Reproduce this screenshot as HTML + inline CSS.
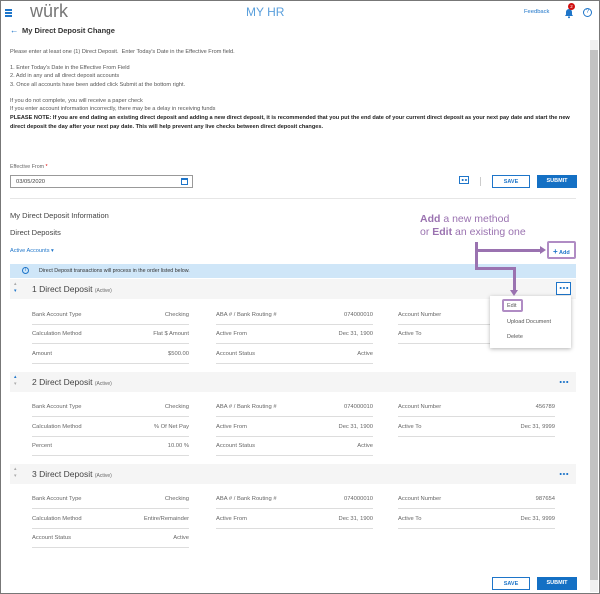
<!DOCTYPE html>
<html><head><meta charset="utf-8"><style>
*{margin:0;padding:0;box-sizing:border-box}
body{width:600px;height:594px;overflow:hidden;background:#fff;font-family:"Liberation Sans",sans-serif;color:#444;position:relative}
.a{position:absolute;white-space:nowrap}
.t{font-size:5.6px;color:#555}
.f{position:absolute;height:19px;border-bottom:1px solid #ddd;font-size:5.8px;color:#666;width:157px}
.f span{position:absolute;top:6px}
.f .v{right:0}
.hd{position:absolute;left:10px;width:566px;height:20px;background:#f5f5f5}
.hd .n{position:absolute;left:22px;top:5px;font-size:8.5px;color:#444}
.hd .n small{font-size:5px;color:#666}
.btn{position:absolute;height:13px;font-size:5.5px;font-weight:bold;text-align:center;line-height:12px}
.save{border:1px solid #1e75c9;color:#1e75c9;background:#fff;width:38px}
.sub{background:#1470c4;color:#fff;width:40px;line-height:13px}
.pur{background:#9a72b0;position:absolute}
.dots{position:absolute;width:10px;height:2px;background:radial-gradient(circle,#1e75c9 0.9px,transparent 1.1px) 0 0/3.3px 2px repeat-x}
</style></head><body>
<div class="a" style="left:0;top:0;width:600px;height:594px;border:1px solid #777"></div>
<!-- header -->
<div class="a" style="left:5px;top:9px;width:7px;height:1.5px;background:#1e75c9;box-shadow:0 3px 0 #1e75c9,0 6px 0 #1e75c9"></div>
<div class="a" style="left:30px;top:1px;font-size:18px;color:#777">würk</div>
<div class="a" style="left:246px;top:5px;font-size:12px;color:#5a9fdc">MY HR</div>
<div class="a" style="left:524px;top:9px;font-size:5.8px;color:#1e75c9">Feedback</div>
<svg class="a" style="left:563px;top:7px" width="12" height="12" viewBox="0 0 12 12"><path d="M2 9h8L9 7.5V5a3 3 0 0 0-6 0v2.5z" fill="#1e75c9"/><circle cx="6" cy="10.2" r="1" fill="#1e75c9"/></svg>
<div class="a" style="left:568px;top:3px;width:7px;height:7px;border-radius:50%;background:#d01010;color:#fff;font-size:4.5px;text-align:center;line-height:7px">2</div>
<div class="a" style="left:583px;top:8px;width:9px;height:9px;border:1px solid #1e75c9;border-radius:50%;font-size:6px;color:#1e75c9;text-align:center;line-height:7px">?</div>
<div class="a" style="left:10px;top:25px;font-size:8.5px;color:#1e75c9">←</div>
<div class="a" style="left:22px;top:26px;font-size:7.5px;font-weight:bold;color:#333">My Direct Deposit Change</div>
<!-- scrollbar -->
<div class="a" style="left:590px;top:40px;width:8px;height:552px;background:#f0f0f0"></div>
<div class="a" style="left:590px;top:50px;width:8px;height:530px;background:#c2c2c2"></div>
<!-- instructions -->
<div class="a t" style="left:10px;top:49px">Please enter at least one (1) Direct Deposit.&nbsp; Enter Today's Date in the Effective From field.</div>
<div class="a t" style="left:10px;top:65px">1. Enter Today's Date in the Effective From Field</div>
<div class="a t" style="left:10px;top:73px">2. Add in any and all direct deposit accounts</div>
<div class="a t" style="left:10px;top:82px">3. Once all accounts have been added click Submit at the bottom right.</div>
<div class="a t" style="left:10px;top:98px">If you do not complete, you will receive a paper check</div>
<div class="a t" style="left:10px;top:106px">If you enter account information incorrectly, there may be a delay in receiving funds</div>
<div class="a t" style="left:10px;top:114px;width:570px;white-space:normal;line-height:8.5px;color:#222;font-weight:bold">PLEASE NOTE: If you are end dating an existing direct deposit and adding a new direct deposit, it is recommended that you put the end date of your current direct deposit as your next pay date and start the new direct deposit the day after your next pay date. This will help prevent any live checks between direct deposit changes.</div>
<!-- effective -->
<div class="a" style="left:10px;top:164px;font-size:5.3px;color:#666">Effective From <span style="color:#d00">*</span></div>
<div class="a" style="left:10px;top:175px;width:183px;height:13px;border:1px solid #999;font-size:5.8px;color:#444;padding:3px 5px">03/05/2020</div>
<div class="a" style="left:181px;top:178px;width:7px;height:7px;border:1px solid #1e75c9;border-top-width:2px"></div>
<div class="a" style="left:459px;top:176px;width:10px;height:8px;border:1px solid #1e75c9"></div>
<div class="dots" style="left:461px;top:179px;width:7px"></div>
<div class="a" style="left:480px;top:177px;width:1px;height:9px;background:#ccc"></div>
<div class="btn save" style="left:492px;top:175px">SAVE</div>
<div class="btn sub" style="left:537px;top:175px">SUBMIT</div>
<div class="a" style="left:10px;top:198px;width:566px;height:1px;background:#e6e6e6"></div>
<div class="a" style="left:10px;top:211px;font-size:7.5px;color:#444">My Direct Deposit Information</div>
<div class="a" style="left:10px;top:228px;font-size:7.5px;color:#444">Direct Deposits</div>
<div class="a" style="left:10px;top:248px;font-size:5.6px;color:#1e75c9">Active Accounts ▾</div>
<!-- banner -->
<div class="a" style="left:10px;top:264px;width:566px;height:14px;background:#cfe6f8"></div>
<div class="a" style="left:22px;top:267px;width:7px;height:7px;border:1px solid #1e75c9;border-radius:50%;font-size:5px;color:#1e75c9;text-align:center;line-height:5px">i</div>
<div class="a" style="left:39px;top:268px;font-size:5.3px;color:#333">Direct Deposit transactions will process in the order listed below.</div>
<!-- deposit 1 -->
<div class="hd" style="top:279px"><div class="n">1 Direct Deposit <small>(Active)</small></div></div>
<div class="a" style="left:14px;top:281px;font-size:5px;color:#aaa;line-height:7px">▴<br><span style="color:#1e75c9">▾</span></div>
<div class="a" style="left:556px;top:282px;width:15px;height:13px;border:1px solid #1e75c9;background:#fff"></div>
<div class="dots" style="left:559px;top:287px"></div>
<div class="f" style="left:32px;top:306px"><span>Bank Account Type</span><span class="v">Checking</span></div>
<div class="f" style="left:32px;top:325px"><span>Calculation Method</span><span class="v">Flat $ Amount</span></div>
<div class="f" style="left:32px;top:345px"><span>Amount</span><span class="v">$500.00</span></div>
<div class="f" style="left:216px;top:306px"><span>ABA # / Bank Routing #</span><span class="v">074000010</span></div>
<div class="f" style="left:216px;top:325px"><span>Active From</span><span class="v">Dec 31, 1900</span></div>
<div class="f" style="left:216px;top:345px"><span>Account Status</span><span class="v">Active</span></div>
<div class="f" style="left:398px;top:306px"><span>Account Number</span></div>
<div class="f" style="left:398px;top:325px"><span>Active To</span></div>
<div class="a" style="left:490px;top:296px;width:81px;height:52px;background:#fff;box-shadow:0 1px 4px rgba(0,0,0,.3)"></div>
<div class="a" style="left:502px;top:299px;width:21px;height:13px;border:2px solid #b08cc4;border-radius:2px;font-size:5.5px;color:#555;padding:2px 0 0 3px">Edit</div>
<div class="a" style="left:507px;top:319px;font-size:5.5px;color:#555">Upload Document</div>
<div class="a" style="left:507px;top:334px;font-size:5.5px;color:#555">Delete</div>
<!-- deposit 2 -->
<div class="hd" style="top:372px"><div class="n">2 Direct Deposit <small>(Active)</small></div></div>
<div class="a" style="left:14px;top:374px;font-size:5px;color:#1e75c9;line-height:7px">▴<br><span style="color:#aaa">▾</span></div>
<div class="dots" style="left:559px;top:381px"></div>
<div class="f" style="left:32px;top:398px"><span>Bank Account Type</span><span class="v">Checking</span></div>
<div class="f" style="left:32px;top:418px"><span>Calculation Method</span><span class="v">% Of Net Pay</span></div>
<div class="f" style="left:32px;top:437px"><span>Percent</span><span class="v">10.00 %</span></div>
<div class="f" style="left:216px;top:398px"><span>ABA # / Bank Routing #</span><span class="v">074000010</span></div>
<div class="f" style="left:216px;top:418px"><span>Active From</span><span class="v">Dec 31, 1900</span></div>
<div class="f" style="left:216px;top:437px"><span>Account Status</span><span class="v">Active</span></div>
<div class="f" style="left:398px;top:398px"><span>Account Number</span><span class="v">456789</span></div>
<div class="f" style="left:398px;top:418px"><span>Active To</span><span class="v">Dec 31, 9999</span></div>
<!-- deposit 3 -->
<div class="hd" style="top:464px"><div class="n">3 Direct Deposit <small>(Active)</small></div></div>
<div class="a" style="left:14px;top:466px;font-size:5px;color:#aaa;line-height:7px">▴<br>▾</div>
<div class="dots" style="left:559px;top:473px"></div>
<div class="f" style="left:32px;top:490px"><span>Bank Account Type</span><span class="v">Checking</span></div>
<div class="f" style="left:32px;top:510px"><span>Calculation Method</span><span class="v">Entire/Remainder</span></div>
<div class="f" style="left:32px;top:529px"><span>Account Status</span><span class="v">Active</span></div>
<div class="f" style="left:216px;top:490px"><span>ABA # / Bank Routing #</span><span class="v">074000010</span></div>
<div class="f" style="left:216px;top:510px"><span>Active From</span><span class="v">Dec 31, 1900</span></div>
<div class="f" style="left:398px;top:490px"><span>Account Number</span><span class="v">987654</span></div>
<div class="f" style="left:398px;top:510px"><span>Active To</span><span class="v">Dec 31, 9999</span></div>
<div class="btn save" style="left:492px;top:577px">SAVE</div>
<div class="btn sub" style="left:537px;top:577px">SUBMIT</div>
<!-- annotation (on top) -->
<div class="a" style="left:420px;top:213px;font-size:10.5px;color:#9a72b0;line-height:13px"><b>Add</b> a new method<br>or <b>Edit</b> an existing one</div>
<div class="pur" style="left:475px;top:242px;width:3px;height:28px"></div>
<div class="pur" style="left:475px;top:249px;width:67px;height:3px"></div>
<div class="a" style="left:540px;top:246px;border-left:6px solid #9a72b0;border-top:4.5px solid transparent;border-bottom:4.5px solid transparent"></div>
<div class="pur" style="left:475px;top:267px;width:41px;height:3px"></div>
<div class="pur" style="left:513px;top:267px;width:3px;height:25px"></div>
<div class="a" style="left:510px;top:290px;border-top:6px solid #9a72b0;border-left:4.5px solid transparent;border-right:4.5px solid transparent"></div>
<div class="a" style="left:547px;top:241px;width:29px;height:18px;border:2px solid #b08cc4;border-radius:2px;background:#fff;font-size:5.5px;color:#1e75c9;padding:4px 0 0 4px;font-weight:bold"><span style="font-size:8px">+</span> Add</div>
</body></html>
